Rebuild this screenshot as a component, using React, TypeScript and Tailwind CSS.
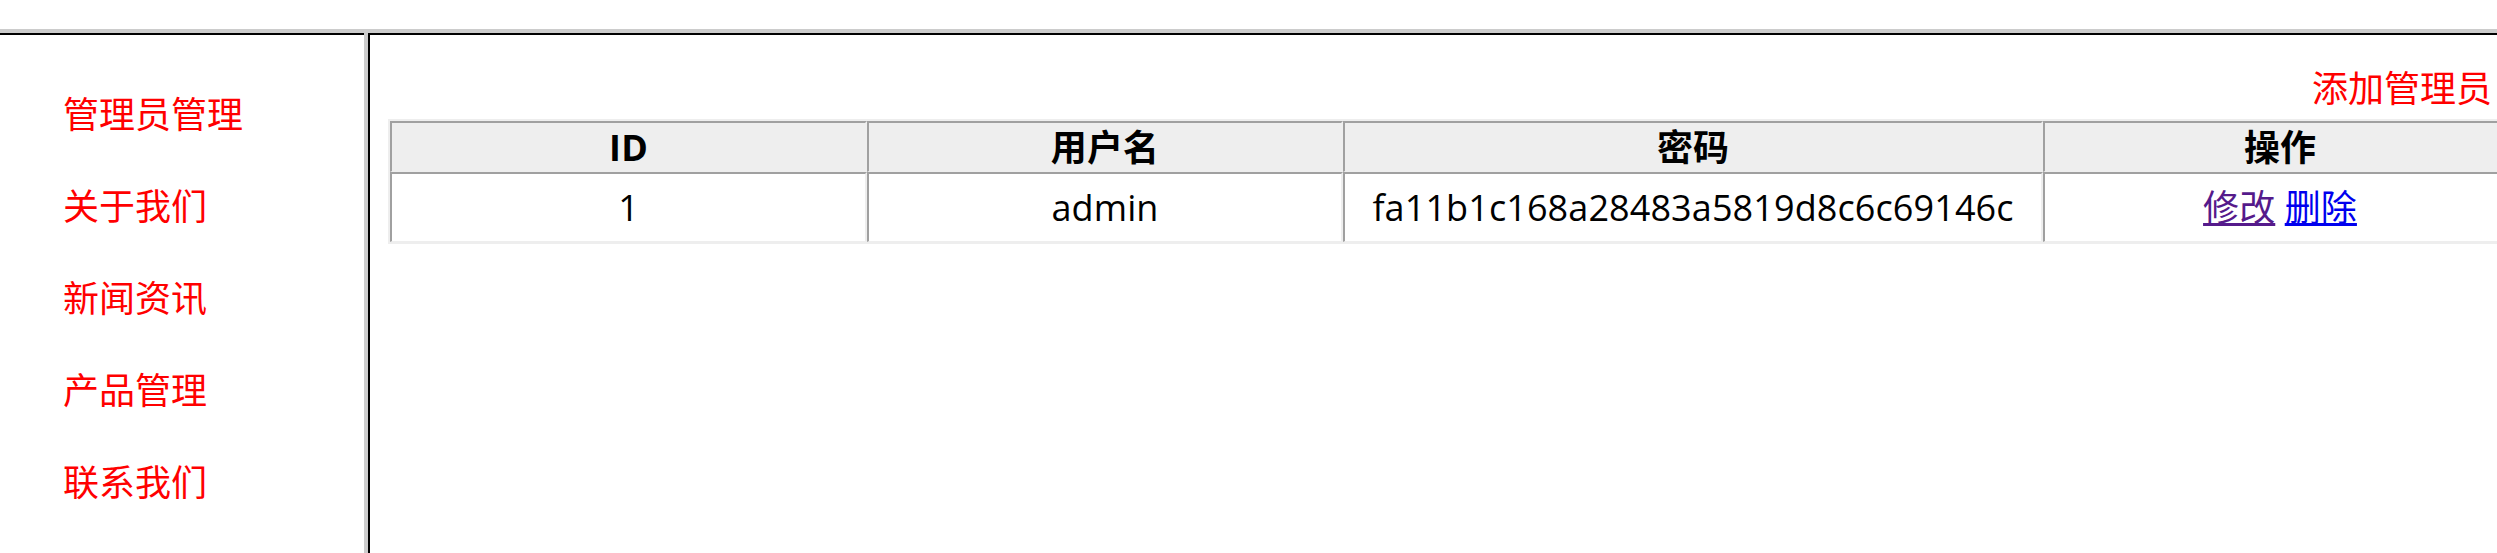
const menu = ['管理员管理', '关于我们', '新闻资讯', '产品管理', '联系我们']

const admins = [{ id: 1, name: 'admin', password: 'fa11b1c168a28483a5819d8c6c69146c' }]

const font = { fontFamily: '"Open Sans", "Noto Sans CJK SC", sans-serif' }

export default function App() {
  return (
    <div className="h-screen w-full flex flex-col bg-white overflow-hidden text-[36px]" style={font}>
      {/* top frame */}
      <div className="h-[29px] shrink-0" />
      <div className="h-[4px] shrink-0 bg-[#cccccc]" />

      <div className="flex flex-1 min-h-0">
        {/* left menu frame */}
        <aside className="w-[364px] shrink-0 border-t-2 border-black pt-[56px] pl-[63px]">
          <ul className="flex flex-col gap-[44px]">
            {menu.map((item) => (
              <li key={item} className="leading-[48px] text-[#ff0000]">
                {item}
              </li>
            ))}
          </ul>
        </aside>

        <div className="w-[4px] shrink-0 bg-[#cccccc]" />

        {/* main frame */}
        <main className="flex-1 min-w-0 border-t-2 border-l-2 border-black overflow-hidden pt-[30px] pl-[18px]">
          <div className="text-right leading-[48px] pr-[5px] text-[#ff0000]">添加管理员</div>

          <table className="mt-[6px] table-fixed border-separate border-spacing-0 border-2 border-[#eeeeee] w-[2131px] text-black text-center tracking-[0.1px]">
            <thead>
              <tr className="bg-[#eeeeee]">
                <th className="w-[477px] font-bold leading-[47px] pt-[1px] border-t-2 border-l-2 border-t-[#a0a0a0] border-l-[#a0a0a0] border-b border-r-2 border-b-[#eeeeee] border-r-[#eeeeee]">ID</th>
                <th className="w-[476px] font-bold leading-[47px] pt-[1px] border-t-2 border-l-2 border-t-[#a0a0a0] border-l-[#a0a0a0] border-b border-r-2 border-b-[#eeeeee] border-r-[#eeeeee]">用户名</th>
                <th className="w-[700px] font-bold leading-[47px] pt-[1px] border-t-2 border-l-2 border-t-[#a0a0a0] border-l-[#a0a0a0] border-b border-r-2 border-b-[#eeeeee] border-r-[#eeeeee]">密码</th>
                <th className="w-[474px] font-bold leading-[47px] pt-[1px] border-t-2 border-l-2 border-t-[#a0a0a0] border-l-[#a0a0a0] border-b border-r-2 border-b-[#eeeeee] border-r-[#eeeeee]">操作</th>
              </tr>
            </thead>
            <tbody>
              {admins.map((a) => (
                <tr key={a.id}>
                  <td className="leading-[66px] pt-[1px] border-t-2 border-l-2 border-t-[#a0a0a0] border-l-[#a0a0a0] border-b border-r-2 border-b-[#eeeeee] border-r-[#eeeeee]">{a.id}</td>
                  <td className="leading-[66px] pt-[1px] border-t-2 border-l-2 border-t-[#a0a0a0] border-l-[#a0a0a0] border-b border-r-2 border-b-[#eeeeee] border-r-[#eeeeee]">{a.name}</td>
                  <td className="leading-[66px] pt-[1px] border-t-2 border-l-2 border-t-[#a0a0a0] border-l-[#a0a0a0] border-b border-r-2 border-b-[#eeeeee] border-r-[#eeeeee]">{a.password}</td>
                  <td className="leading-[66px] pt-[1px] border-t-2 border-l-2 border-t-[#a0a0a0] border-l-[#a0a0a0] border-b border-r-2 border-b-[#eeeeee] border-r-[#eeeeee]">
                    <a href="#" className="underline text-[#551a8b]">修改</a>{' '}
                    <a href="#" className="underline text-[#0000ee]">删除</a>
                  </td>
                </tr>
              ))}
            </tbody>
          </table>
        </main>
      </div>
    </div>
  )
}
